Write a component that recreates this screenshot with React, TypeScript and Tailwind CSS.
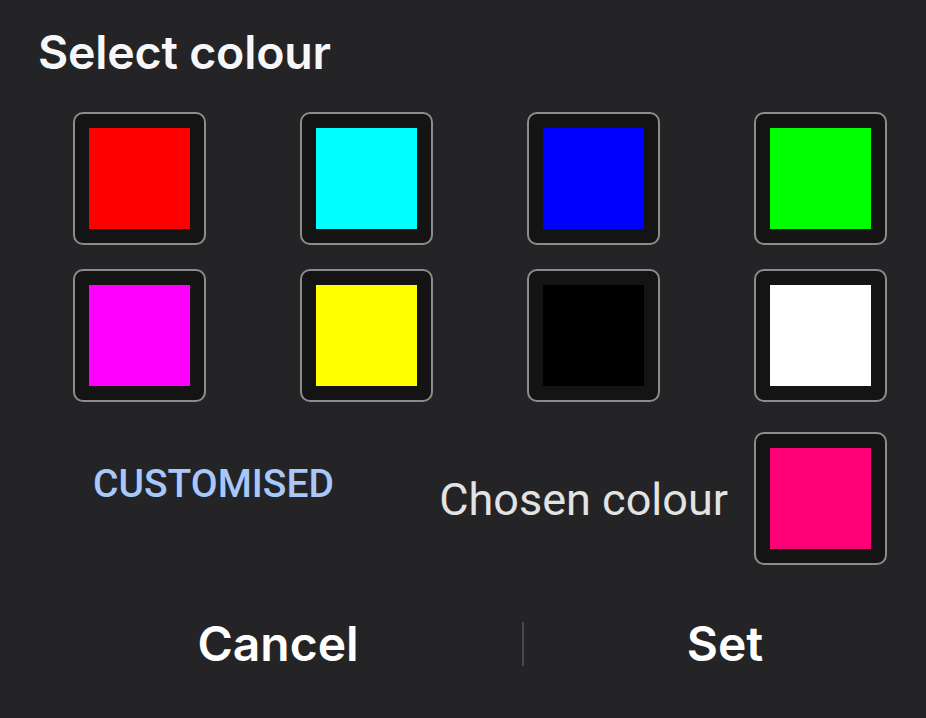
import React from "react";

const colours = [
  "#ff0000",
  "#00ffff",
  "#0000ff",
  "#00ff00",
  "#ff00ff",
  "#ffff00",
  "#000000",
  "#ffffff",
];

function Swatch({ color }: { color: string }) {
  return (
    <div className="w-[133px] h-[133px] rounded-[10px] border-2 border-[#8c8c8c] bg-[#141414] p-[14px]">
      <div className="w-full h-full" style={{ backgroundColor: color }} />
    </div>
  );
}

export default function App() {
  return (
    <div
      className="w-[926px] h-[718px] bg-[#242426] flex flex-col"
      style={{ fontFamily: "Roboto, 'Noto Sans', sans-serif" }}
    >
      <h1
        className="pl-[38px] pt-[22px] text-[46.5px] leading-[60px] font-semibold text-[#f7f7f9] tracking-[-0.2px]"
        style={{ fontFamily: "Inter, 'Open Sans', sans-serif" }}
      >
        Select colour
      </h1>
      <div className="mt-[30px] pl-[73px] grid grid-cols-[repeat(4,133px)] gap-x-[94px] gap-y-[24px]">
        {colours.map((c) => (
          <Swatch key={c} color={c} />
        ))}
      </div>
      <div className="mt-[30px] pl-[73px] flex items-center">
        <div className="w-[360px] flex justify-start pl-[20px] -mt-[30px]">
          <span className="text-[39px] leading-[44px] font-medium text-[#a8c7fa]">
            CUSTOMISED
          </span>
        </div>
        <div className="flex-1 flex items-center justify-end pr-[39px] gap-[26px]">
          <span className="text-[45px] leading-[50px] text-[#e3e3e3] mt-[2px]">Chosen colour</span>
          <Swatch color="#ff0077" />
        </div>
      </div>
      <div
        className="mt-[51px] flex items-center"
        style={{ fontFamily: "Inter, 'Open Sans', sans-serif" }}
      >
        <div className="w-[522px] flex justify-center pl-[34px]">
          <span className="text-[48px] leading-[56px] font-semibold text-white">Cancel</span>
        </div>
        <div className="w-[2px] h-[44px] bg-[#4a4a4c]" />
        <div className="flex-1 flex justify-center">
          <span className="text-[48px] leading-[56px] font-semibold text-white">Set</span>
        </div>
      </div>
    </div>
  );
}
